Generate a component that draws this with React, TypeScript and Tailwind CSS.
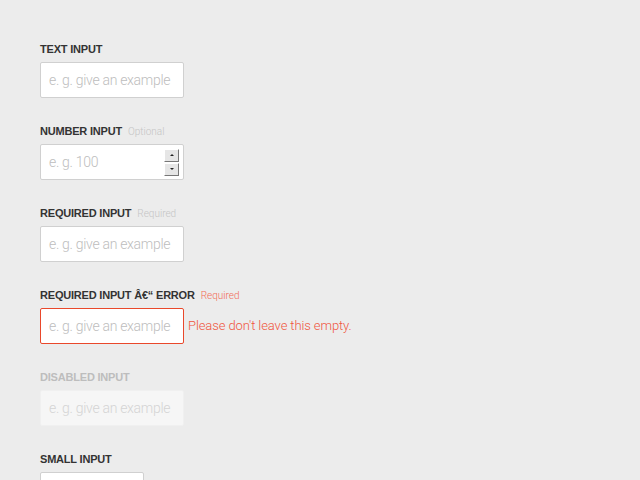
import React from "react";

const font = { fontFamily: '"Liberation Sans", Arial, sans-serif' };
const light = { fontFamily: 'Roboto, "Liberation Sans", Arial, sans-serif', fontWeight: 300 };

function Label({ text, hint, hintClass = "text-[#c4c4c4]", labelClass = "text-[#333]" }: { text: string; hint?: string; hintClass?: string; labelClass?: string }) {
  return (
    <div className="flex items-baseline gap-[6px] h-[13px] leading-[13px]">
      <span className={`text-[11px] font-bold tracking-[-0.2px] ${labelClass}`} style={font}>{text}</span>
      {hint && <span className={`text-[10px] ${hintClass}`} style={light}>{hint}</span>}
    </div>
  );
}

function Box({ placeholder, className = "", children }: { placeholder: string; className?: string; children?: React.ReactNode }) {
  return (
    <div className={`w-[144px] h-[36px] rounded-[2px] border flex items-center pl-[8px] pr-[4px] ${className}`}>
      <span className="text-[14px] flex-1 tracking-[-0.3px]" style={light}>{placeholder}</span>
      {children}
    </div>
  );
}

function Spinner() {
  return (
    <div className="flex flex-col gap-[1px]">
      <div className="w-[15px] h-[13px] bg-[#e6e6e6] border border-t-white border-l-white border-b-[#777] border-r-[#777] flex items-center justify-center">
        <div className="w-0 h-0 border-l-[2px] border-r-[2px] border-b-[2px] border-l-transparent border-r-transparent border-b-[#222]" />
      </div>
      <div className="w-[15px] h-[13px] bg-[#e6e6e6] border border-t-white border-l-white border-b-[#777] border-r-[#777] flex items-center justify-center">
        <div className="w-0 h-0 border-l-[2px] border-r-[2px] border-t-[2px] border-l-transparent border-r-transparent border-t-[#222]" />
      </div>
    </div>
  );
}

export default function App() {
  return (
    <div className="w-[640px] h-[480px] bg-[#ececec] overflow-hidden pl-[40px] pt-[43px]">
      <div className="flex flex-col gap-[27px]">
        <div className="flex flex-col gap-[6px]">
          <Label text="TEXT INPUT" />
          <Box placeholder="e. g. give an example" className="bg-white border-[#d0d0d0] text-[#bdbdbd]" />
        </div>
        <div className="flex flex-col gap-[6px]">
          <Label text="NUMBER INPUT" hint="Optional" />
          <Box placeholder="e. g. 100" className="bg-white border-[#d0d0d0] text-[#bdbdbd]">
            <Spinner />
          </Box>
        </div>
        <div className="flex flex-col gap-[6px]">
          <Label text="REQUIRED INPUT" hint="Required" />
          <Box placeholder="e. g. give an example" className="bg-white border-[#d0d0d0] text-[#bdbdbd]" />
        </div>
        <div className="flex flex-col gap-[6px]">
          <Label text="REQUIRED INPUT Â€“ ERROR" hint="Required" hintClass="text-[#f26b55]" />
          <div className="flex items-center gap-[4px]">
            <Box placeholder="e. g. give an example" className="bg-white border-[#e9482b] text-[#bdbdbd]" />
            <span className="text-[13px] text-[#f0553c] tracking-[-0.1px]" style={light}>Please don't leave this empty.</span>
          </div>
        </div>
        <div className="flex flex-col gap-[6px]">
          <Label text="DISABLED INPUT" labelClass="text-[#bdbdbd]" />
          <Box placeholder="e. g. give an example" className="bg-[#f6f6f6] border-[#f0f0f0] text-[#d4d4d4]" />
        </div>
        <div className="flex flex-col gap-[6px]">
          <Label text="SMALL INPUT" />
          <div className="w-[104px] h-[36px] rounded-[2px] border border-[#d0d0d0] bg-white shrink-0" />
        </div>
      </div>
    </div>
  );
}
